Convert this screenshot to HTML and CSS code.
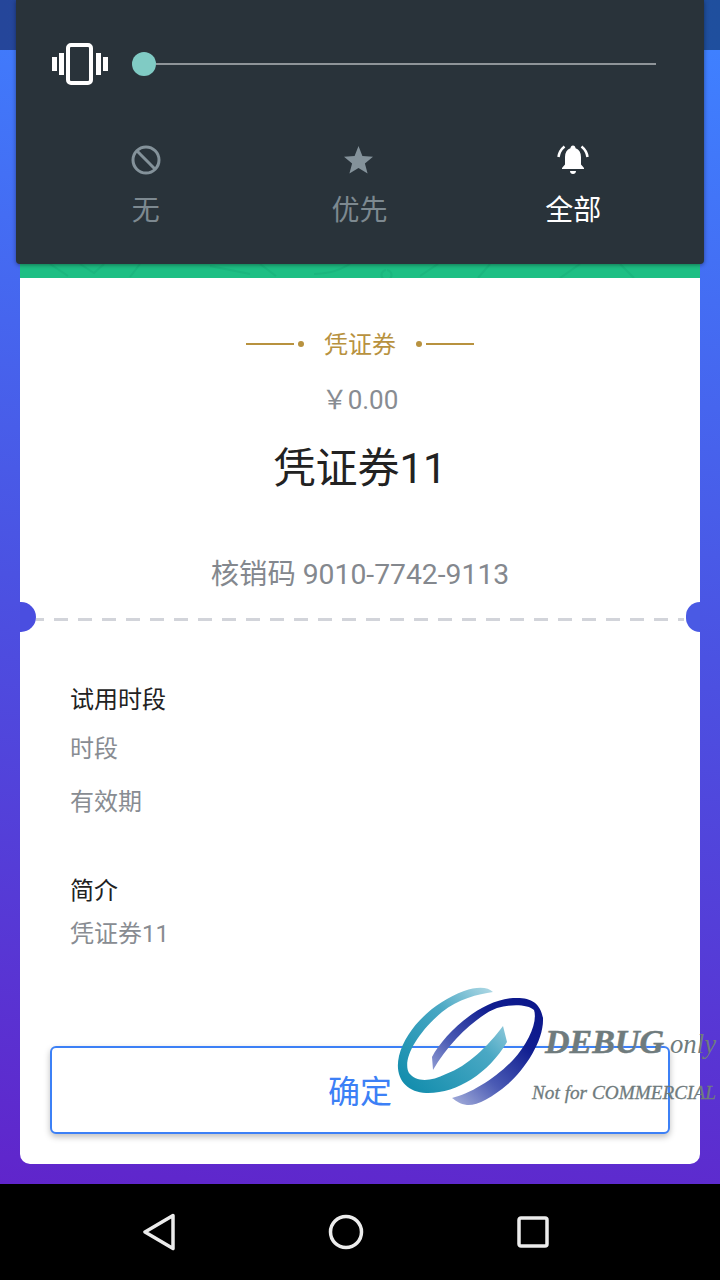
FILE: index.html
```html
<!DOCTYPE html>
<html lang="zh">
<head>
<meta charset="utf-8">
<title>凭证券</title>
<link rel="stylesheet" href="styles.css">
</head>
<body>
<div class="screen">
  <div class="status-bar"></div>
  <div class="content">
    <div class="ticket">
      <div class="hero">
        <svg class="hero-pattern" viewBox="0 0 680 14" preserveAspectRatio="none">
          <path d="M30 0l18 12M60 0l14 9 10-9M120 0l-10 13M190 2l40 8M240 0l16 12M330 0c-14 8-20 9-36 10M366 6a5 5 0 1 0 1 0M400 12l18-12M470 0l-12 14M540 14l20-14M600 0l14 14" />
        </svg>
      </div>
      <div class="ticket-top">
        <div class="kind">
          <span class="kind-line"></span>
          <span class="kind-dot"></span>
          <span class="kind-name">凭证券</span>
          <span class="kind-dot"></span>
          <span class="kind-line"></span>
        </div>
        <div class="price">￥0.00</div>
        <div class="title">凭证券11</div>
        <div class="code">核销码 9010-7742-9113</div>
      </div>
      <div class="divider">
        <span class="notch notch-left"></span>
        <span class="notch notch-right"></span>
      </div>
      <div class="ticket-body">
        <div class="label">试用时段</div>
        <div class="info info-first">时段</div>
        <div class="info info-second">有效期</div>
        <div class="label label-intro">简介</div>
        <div class="info info-intro">凭证券11</div>
        <button class="confirm">确定</button>
      </div>
    </div>
  </div>
  <div class="nav-bar">
    <svg class="nav-icon" width="32" height="38" viewBox="0 0 32 38">
      <path d="M30 2.500L2 19l28 16.500z" />
    </svg>
    <svg class="nav-icon" width="36" height="36" viewBox="0 0 36 36">
      <circle cx="18" cy="18" r="15.500" />
    </svg>
    <svg class="nav-icon" width="32" height="32" viewBox="0 0 32 32">
      <rect x="2" y="2" width="28" height="28" rx="2" />
    </svg>
  </div>

  <div class="sound-panel">
    <div class="volume-row">
      <svg class="vibrate" width="56" height="42" viewBox="0 0 56 42">
        <rect x="16" y="2" width="23" height="38" rx="3" />
        <path class="vibrate-bars" d="M7 10h5v22H7zM0 14h5v14H0zM44 10h5v22h-5zM51 14h5v14h-5z" />
      </svg>
      <div class="slider">
        <span class="slider-thumb"></span>
        <span class="slider-track"></span>
      </div>
    </div>
    <div class="modes">
      <div class="mode">
        <svg width="32" height="32" viewBox="0 0 32 32">
          <circle class="none-icon" cx="16" cy="16" r="13" />
          <path class="none-icon" d="M6.800 6.800l18.400 18.400" />
        </svg>
        <span>无</span>
      </div>
      <div class="mode">
        <svg width="32" height="32" viewBox="0 0 32 32">
          <path class="star-icon" d="M15.500 2l3.900 10 10.600.8-8.100 6.600 2.700 10.100-9.100-5.600-9.100 5.600 2.700-10.100L1 12.800l10.600-.8z" />
        </svg>
        <span>优先</span>
      </div>
      <div class="mode mode-active">
        <svg width="32" height="32" viewBox="0 0 32 32">
          <path class="bell-icon" d="M16 1.500c1.500 0 2.400 1.200 2.600 2.800 3.600 1.300 5.400 4.500 5.400 8.700v7.500l3 3.500v1H5v-1l3-3.500V13c0-4.200 1.800-7.400 5.400-8.700.2-1.600 1.100-2.800 2.600-2.800zM13 27h6c0 1.800-1.300 3-3 3s-3-1.200-3-3z" />
          <path class="bell-arc" d="M7.500 2.500C3.800 5.500 2 9 1.500 13M24.500 2.500c3.700 3 5.500 6.500 6 10.500" />
        </svg>
        <span>全部</span>
      </div>
    </div>
  </div>

  <div class="watermark">
    <svg width="340" height="150" viewBox="0 0 340 150">
      <defs>
        <linearGradient id="tealGrad" x1="0" y1="1" x2="1" y2="0">
          <stop offset="0" stop-color="#0c8aaa" />
          <stop offset="0.6" stop-color="#4aa8c4" />
          <stop offset="1" stop-color="#c5e3ec" />
        </linearGradient>
        <linearGradient id="navyGrad" x1="1" y1="0" x2="0" y2="1">
          <stop offset="0" stop-color="#0b168a" />
          <stop offset="0.3" stop-color="#101e90" />
          <stop offset="0.62" stop-color="#4a5ab4" />
          <stop offset="1" stop-color="#c4cce8" />
        </linearGradient>
      </defs>
      <path fill="url(#navyGrad)" d="M52 87C64 64 100 30 133 28C150 27 160 32 163 48C164 70 146 98 128 114C112 128 96 136 87 135C80 134 76 131 72 128C90 124 116 108 133 90C148 74 158 52 154 40C148 34 130 34 117 38C100 44 70 70 53 100Z" />
      <path fill="url(#tealGrad)" d="M113 22C108 17 98 16 84 21C54 32 26 58 19 86C14 108 26 122 46 123C76 124 108 104 127 72L123 56C108 76 88 96 66 104C50 112 36 112 29 103C22 90 36 64 62 42C78 29 98 24 113 22Z" />
      <text class="wm-debug" x="165" y="83">DEBUG</text>
      <text class="wm-only" x="290" y="83" textLength="46" lengthAdjust="spacingAndGlyphs">only</text>
      <text class="wm-note" x="152" y="128.500" textLength="184" lengthAdjust="spacingAndGlyphs">Not for COMMERCIAL</text>
    </svg>
  </div>
</div>
</body>
</html>
```

FILE: styles.css
```css
* {
  box-sizing: border-box;
}
body {
  margin: 0;
  padding: 0;
  background: black;
  font-family: Roboto, "Noto Sans CJK SC", sans-serif;
}
.screen {
  position: relative;
  width: 720px;
  height: 1280px;
  display: flex;
  flex-direction: column;
  overflow: hidden;
}
.status-bar {
  height: 50px;
  background: linear-gradient(90deg, #25469a, #1f4f9e);
}
.content {
  height: 1134px;
  padding: 0 20px 20px;
  background: linear-gradient(187deg, #3f80ff 0%, #4b52e2 50%, #6025cb 100%);
}
.ticket {
  height: 100%;
  background: white;
  border-radius: 0 0 10px 10px;
  display: flex;
  flex-direction: column;
}
.hero {
  height: 228px;
  background: #1ebf84;
  position: relative;
}
.hero-pattern {
  position: absolute;
  left: 0;
  bottom: 0;
  width: 100%;
  height: 14px;
  fill: none;
  stroke: #1bb67e;
  stroke-width: 2;
}

/* ticket head */
.ticket-top {
  height: 340px;
  padding-top: 50px;
  display: flex;
  flex-direction: column;
  align-items: center;
}
.kind {
  display: flex;
  align-items: center;
  height: 32px;
  color: #b8923f;
  font-size: 24px;
}
.kind-line {
  width: 48px;
  height: 2px;
  background: #b8923f;
}
.kind-dot {
  width: 6px;
  height: 6px;
  margin: 0 4px;
  border-radius: 50%;
  background: #b8923f;
}
.kind-name {
  margin: 2px 16px 0;
  line-height: 32px;
}
.price {
  margin-top: 22px;
  font-size: 26px;
  line-height: 36px;
  color: #888c92;
}
.title {
  margin-top: 23px;
  font-size: 42px;
  line-height: 56px;
  color: #222;
}
.code {
  margin-top: 58px;
  font-size: 28.300px;
  line-height: 40px;
  color: #84888e;
}
.divider {
  position: relative;
  height: 3px;
  margin: 0 16px;
  background: repeating-linear-gradient(90deg, #d2d4da 0, #d2d4da 14px, transparent 14px, transparent 24px);
  background-position: -6px 0;
}
.notch {
  position: absolute;
  top: -16px;
  height: 30px;
  background: #4a4ee0;
}
.notch-left {
  left: -16px;
  width: 16px;
  border-radius: 0 15px 15px 0;
}
.notch-right {
  right: -16px;
  width: 14px;
  border-radius: 15px 0 0 15px;
  background: #4a5ae4;
}

/* ticket details */
.ticket-body {
  flex: 1;
  padding: 0 30px;
}
.label {
  margin-top: 62px;
  margin-left: 20px;
  font-size: 24px;
  line-height: 34px;
  color: #222;
}
.label-intro {
  margin-top: 55px;
}
.info {
  margin-left: 20px;
  font-size: 24px;
  line-height: 34px;
  color: #888c92;
}
.info-first {
  margin-top: 15px;
}
.info-second {
  margin-top: 19px;
}
.info-intro {
  margin-top: 9px;
}
.confirm {
  display: block;
  width: 620px;
  height: 88px;
  margin-top: 95px;
  padding-bottom: 4px;
  background: white;
  border: 2px solid #3c80f6;
  border-radius: 6px;
  box-shadow: 0 3px 6px rgba(0, 0, 0, 0.25);
  color: #3c80f6;
  font-family: inherit;
  font-size: 32px;
}

/* android nav */
.nav-bar {
  height: 96px;
  background: black;
  display: flex;
  align-items: center;
  padding-left: 143px;
  gap: 153px;
}
.nav-icon {
  fill: none;
  stroke: #ececec;
  stroke-width: 3.500;
  stroke-linejoin: round;
}

/* volume panel, lies over the page */
.sound-panel {
  position: absolute;
  left: 16px;
  top: 0;
  width: 688px;
  height: 264px;
  padding: 43px 24px 0 23px;
  background: #29333a;
  border-radius: 0 0 4px 4px;
  box-shadow: 0 1px 4px rgba(0, 0, 0, 0.4);
}
.volume-row {
  display: flex;
  align-items: center;
  height: 42px;
  padding-left: 13px;
}
.vibrate rect {
  fill: none;
  stroke: white;
  stroke-width: 4;
}
.vibrate-bars {
  fill: white;
}
.slider {
  display: flex;
  align-items: center;
  width: 524px;
  margin-left: 24px;
}
.slider-thumb {
  width: 24px;
  height: 24px;
  border-radius: 50%;
  background: #80cbc4;
}
.slider-track {
  flex: 1;
  height: 2px;
  background: #8f9599;
}
.modes {
  display: grid;
  grid-template-columns: repeat(3, 1fr);
  margin-top: 59px;
}
.mode {
  display: flex;
  flex-direction: column;
  align-items: center;
  color: #7d8990;
  font-size: 28px;
  line-height: 38px;
}
.mode span {
  margin-top: 16px;
}
.mode-active {
  color: white;
}
.none-icon {
  fill: none;
  stroke: #84929a;
  stroke-width: 3;
}
.star-icon {
  fill: #84929a;
}
.bell-icon {
  fill: white;
}
.bell-arc {
  fill: none;
  stroke: white;
  stroke-width: 2.500;
}

/* debug stamp */
.watermark {
  position: absolute;
  left: 380px;
  top: 970px;
  width: 340px;
  height: 150px;
}
.watermark svg {
  display: block;
}
.watermark text {
  font-family: "Liberation Serif", serif;
  font-style: italic;
  fill: #6f7b7d;
}
.wm-debug {
  font-size: 34px;
  font-weight: bold;
  stroke: #6f7b7d;
  stroke-width: 0.500;
}
.wm-only {
  font-size: 27px;
}
.wm-note {
  font-size: 19.500px;
  stroke: #6f7b7d;
  stroke-width: 0.300;
}
```
